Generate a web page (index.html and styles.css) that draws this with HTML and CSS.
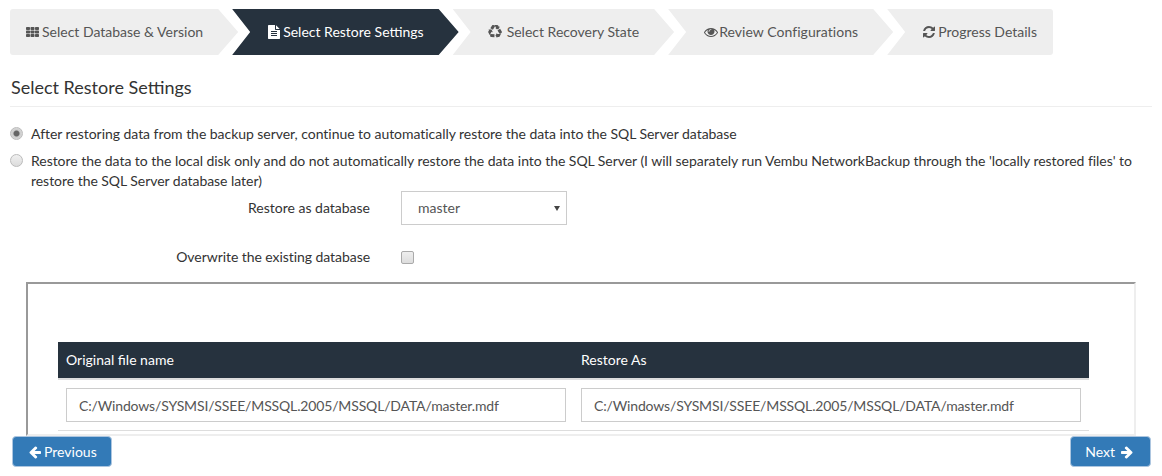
FILE: index.html
```html
<!DOCTYPE html>
<html lang="en">
<head>
<meta charset="utf-8">
<title>Restore wizard</title>
<link rel="stylesheet" href="styles.css">
</head>
<body>
<nav class="wizard">
  <div class="step step-first">
    <svg class="icon icon-th" viewBox="0 0 1664 1792" aria-hidden="true"><g><rect x="0" y="256" width="512" height="384" rx="90"/><rect x="576" y="256" width="512" height="384" rx="90"/><rect x="1152" y="256" width="512" height="384" rx="90"/><rect x="0" y="704" width="512" height="384" rx="90"/><rect x="576" y="704" width="512" height="384" rx="90"/><rect x="1152" y="704" width="512" height="384" rx="90"/><rect x="0" y="1152" width="512" height="384" rx="90"/><rect x="576" y="1152" width="512" height="384" rx="90"/><rect x="1152" y="1152" width="512" height="384" rx="90"/></g></svg>
    <span>Select Database &amp; Version</span>
  </div>
  <div class="step step-active">
    <svg class="icon icon-file" viewBox="128 0 1536 1792" aria-hidden="true"><path d="M1596 476q14 14 28 36h-472v-472q22 14 36 28zm-476 164h544v1056q0 40-28 68t-68 28h-1344q-40 0-68-28t-28-68v-1600q0-40 28-68t68-28h800v544q0 40 28 68t68 28zm160 736v-64q0-14-9-23t-23-9h-704q-14 0-23 9t-9 23v64q0 14 9 23t23 9h704q14 0 23-9t9-23zm0-256v-64q0-14-9-23t-23-9h-704q-14 0-23 9t-9 23v64q0 14 9 23t23 9h704q14 0 23-9t9-23zm0-256v-64q0-14-9-23t-23-9h-704q-14 0-23 9t-9 23v64q0 14 9 23t23 9h704q14 0 23-9t9-23z"/></svg>
    <span>Select Restore Settings</span>
  </div>
  <div class="step step-third">
    <svg class="icon icon-recycle" viewBox="0 0 1792 1792" aria-hidden="true"><path d="M836 1169l-15 368-2 22-420-29q-36-3-67-31.5t-47-65.5q-11-27-14.5-55t4-65 12-55 21.5-64 19-53q78 12 509 28zm-387-586l180 379-147-92q-63 72-111.5 144.5t-72.5 125-39.5 94.5-18.5 63l-4 21-190-357q-17-26-18-56t6-47l8-18q35-63 114-188l-140-86zm1231 517l-188 359q-12 29-36.5 46.5t-43.5 20.5l-18 4q-71 7-219 12l8 164-230-367 211-362 7 173q170 16 283 5t170-33zm-785-924q-47 63-265 435l-317-187-19-12 225-356q20-31 60-45t80-10q24 2 48.5 12t42 21 41.5 33 36 34.5 36 39.5 32 35zm655 307l212 363q18 37 12.5 76t-27.5 74q-13 20-33 37t-38 28-48.5 22-47 16-51.5 14-46 12q-34-72-265-436l313-195zm-143-226l142-83-220 373-419-20 151-86q-34-89-75-166t-75.5-123.5-64.5-80-47-46.5l-17-13 405 1q31-3 58 10.5t39 28.5l11 15q39 61 112 190z"/></svg>
    <span>Select Recovery State</span>
  </div>
  <div class="step step-fourth">
    <svg class="icon icon-eye" viewBox="0 0 1792 1792" aria-hidden="true"><path d="M1664 960q-152-236-381-353 61 104 61 225 0 185-131.5 316.5t-316.5 131.5-316.5-131.5-131.5-316.5q0-121 61-225-229 117-381 353 133 205 333.5 326.5t434.5 121.5 434.5-121.5 333.5-326.5zm-720-384q0-20-14-34t-34-14q-125 0-214.5 89.5t-89.5 214.5q0 20 14 34t34 14 34-14 14-34q0-86 61-147t147-61q20 0 34-14t14-34zm848 384q0 34-20 69-140 230-376.5 368.5t-499.5 138.5-499.5-139-376.5-368q-20-35-20-69t20-69q140-229 376.5-368t499.5-139 499.5 139 376.5 368q20 35 20 69z"/></svg>
    <span>Review Configurations</span>
  </div>
  <div class="step step-last">
    <svg class="icon icon-refresh" viewBox="128 0 1536 1792" aria-hidden="true"><path d="M1639 1056q0 5-1 7-64 268-268 434.5t-478 166.5q-146 0-282.5-55t-243.5-157l-129 129q-19 19-45 19t-45-19-19-45v-448q0-26 19-45t45-19h448q26 0 45 19t19 45-19 45l-137 137q71 66 161 102t187 36q134 0 250-65t186-179q11-17 53-117 8-23 30-23h192q13 0 22.5 9.5t9.5 22.5zm25-800v448q0 26-19 45t-45 19h-448q-26 0-45-19t-19-45 19-45l138-138q-148-137-349-137-134 0-250 65t-186 179q-11 17-53 117-8 23-30 23h-199q-13 0-22.5-9.5t-9.5-22.5v-7q65-268 270-434.5t480-166.5q146 0 284 55.5t245 156.5l130-129q19-19 45-19t45 19 19 45z"/></svg>
    <span>Progress Details</span>
  </div>
</nav>

<main class="content">
  <h1 class="title">Select Restore Settings</h1>

  <label class="option option-first">
    <input class="radio" type="radio" name="mode" checked>
    <span>After restoring data from the backup server, continue to automatically restore the data into the SQL Server database</span>
  </label>
  <label class="option">
    <input class="radio" type="radio" name="mode">
    <span>Restore the data to the local disk only and do not automatically restore the data into the SQL Server (I will separately run Vembu NetworkBackup through the 'locally restored files' to restore the SQL Server database later)</span>
  </label>

  <div class="field field-db">
    <span class="field-label">Restore as database</span>
    <div class="select"><span>master</span><i class="caret"></i></div>
  </div>
  <div class="field field-overwrite">
    <span class="field-label field-label-tight">Overwrite the existing database</span>
    <input class="check" type="checkbox">
  </div>

  <section class="files">
    <div class="files-head">
      <div class="col">Original file name</div>
      <div class="col">Restore As</div>
    </div>
    <div class="files-row">
      <div class="col"><input class="path" type="text" value="C:/Windows/SYSMSI/SSEE/MSSQL.2005/MSSQL/DATA/master.mdf"></div>
      <div class="col"><input class="path" type="text" value="C:/Windows/SYSMSI/SSEE/MSSQL.2005/MSSQL/DATA/master.mdf"></div>
    </div>
  </section>
</main>

<footer class="actions">
  <button class="btn btn-prev" type="button">
    <svg class="icon" viewBox="128 0 1536 1792" aria-hidden="true"><path d="M1664 896v128q0 53-32.5 90.5t-84.5 37.5h-704l293 294q38 36 38 90t-38 90l-75 75q-38 38-90 38-53 0-91-38l-651-652q-37-37-37-90 0-52 37-91l651-650q38-38 91-38 52 0 90 38l75 74q38 38 38 91t-38 91l-293 293h704q52 0 84.5 37.5t32.5 90.5z"/></svg>
    <span>Previous</span>
  </button>
  <button class="btn btn-next" type="button">
    <span>Next</span>
    <svg class="icon" viewBox="128 0 1536 1792" aria-hidden="true"><path d="M1600 960q0 54-37 91l-651 651q-39 37-91 37-51 0-90-37l-75-75q-38-38-38-91t38-91l293-293h-704q-52 0-84.5-37.5t-32.5-90.5v-128q0-53 32.5-90.5t84.5-37.5h704l-293-294q-38-36-38-90t38-90l75-75q38-38 90-38 53 0 91 38l651 651q37 35 37 90z"/></svg>
  </button>
</footer>
</body>
</html>
```

FILE: styles.css
```css
* { box-sizing: border-box; }

html, body { height: 100%; }

body {
  margin: 0;
  overflow: hidden;
  background: #fff;
  color: #333;
  font-family: Lato, "Liberation Sans", sans-serif;
  font-size: 14px;
  line-height: 20px;
}

.wizard {
  display: flex;
  padding: 9px 0 0 10px;
}

.step {
  display: flex;
  align-items: center;
  gap: 3px;
  height: 46px;
  padding: 0 35px 0 36px;
  margin-left: -6px;
  background: #eee;
  color: #555;
  clip-path: polygon(0 0, calc(100% - 20px) 0, 100% 50%, calc(100% - 20px) 100%, 0 100%, 18px 50%);
}

.step-first {
  margin-left: 0;
  padding-left: 16px;
  border-radius: 3px 0 0 3px;
  clip-path: polygon(0 0, calc(100% - 20px) 0, 100% 50%, calc(100% - 20px) 100%, 0 100%);
}

.step-third { padding-left: 35px; }

.step-fourth { letter-spacing: 0.05px; }

.step-last {
  padding: 0 16px 0 36px;
  border-radius: 0 3px 3px 0;
  clip-path: polygon(0 0, 100% 0, 100% 100%, 0 100%, 18px 50%);
}

.step-active {
  background: #26323e;
  color: #fff;
}

.icon {
  display: block;
  flex: none;
  height: 14px;
  fill: currentColor;
}

.icon-th { width: 13px; }
.icon-file { width: 12px; }
.icon-recycle { width: 14px; margin-right: 2px; }
.icon-eye { width: 14px; margin-right: -2px; }
.icon-refresh { width: 12px; }

.content {
  padding: 0 10px;
}

.title {
  margin: 21px 0 0;
  padding: 0 0 7px 1px;
  border-bottom: 1px solid #eee;
  color: #333;
  font-size: 18px;
  font-weight: 400;
  line-height: 23px;
}

.option {
  display: flex;
  gap: 8px;
  margin-top: 7px;
  color: #333;
  letter-spacing: -0.04px;
}

.option-first { margin-top: 17px; }

.radio {
  appearance: none;
  flex: none;
  width: 13px;
  height: 13px;
  margin: 3px 0 0 0;
  border: 1px solid #bbb;
  border-radius: 50%;
  background: linear-gradient(#f0f0f0, #dcdcdc);
}

.radio:checked {
  background: radial-gradient(circle, #666 0 2.5px, #ccc 3.5px, #e4e4e4 100%);
}

.field {
  display: flex;
  align-items: center;
  gap: 31px;
}

.field-db { height: 34px; }
.field-overwrite { margin-top: 16px; height: 32px; }

.field-label {
  width: 360px;
  text-align: right;
}

.field-label-tight { letter-spacing: -0.06px; }

.select {
  display: flex;
  align-items: center;
  justify-content: space-between;
  width: 166px;
  height: 34px;
  padding: 0 6px 0 16px;
  border: 1px solid #ccc;
  color: #555;
}

.caret {
  width: 0;
  height: 0;
  border-left: 3px solid transparent;
  border-right: 3px solid transparent;
  border-top: 5px solid #444;
}

.check {
  appearance: none;
  width: 13px;
  height: 13px;
  margin: 0;
  border: 1px solid #aaa;
  border-radius: 2px;
  background: linear-gradient(#eee, #ddd);
}

.files {
  height: 154px;
  margin: 9px 16px 0 16px;
  padding: 58px 45px 0 30px;
  overflow: hidden;
  border: 2px solid;
  border-color: #999 #eee #eee #999;
}

.files-head {
  display: grid;
  grid-template-columns: 515px 1fr;
  box-sizing: content-box;
  height: 36px;
  align-items: center;
  border-bottom: 2px solid #ddd;
  background: #26323e;
  color: #fff;
}

.files-head .col { padding: 0 8px; }

.files-row {
  display: grid;
  grid-template-columns: 515px 1fr;
  padding: 8px 0;
  border-bottom: 1px solid #ddd;
}

.files-row .col { padding: 0 8px; }

.path {
  display: block;
  width: 500px;
  height: 34px;
  padding: 0 12px;
  border: 1px solid #ccc;
  background: #fff;
  color: #555;
  font: inherit;
  letter-spacing: -0.15px;
}

.actions {
  display: flex;
  justify-content: space-between;
  padding: 0 11px 0 12px;
}

.btn {
  display: flex;
  align-items: center;
  height: 31px;
  border: 1px solid #adc6e0;
  border-radius: 4px;
  background: #337ab7;
  color: #fff;
  font: inherit;
}

.btn .icon { width: 12px; }

.btn-prev {
  gap: 3px;
  padding: 0 14px 0 16px;
}

.btn-next {
  gap: 6px;
  padding: 0 17px 0 14px;
}
```
